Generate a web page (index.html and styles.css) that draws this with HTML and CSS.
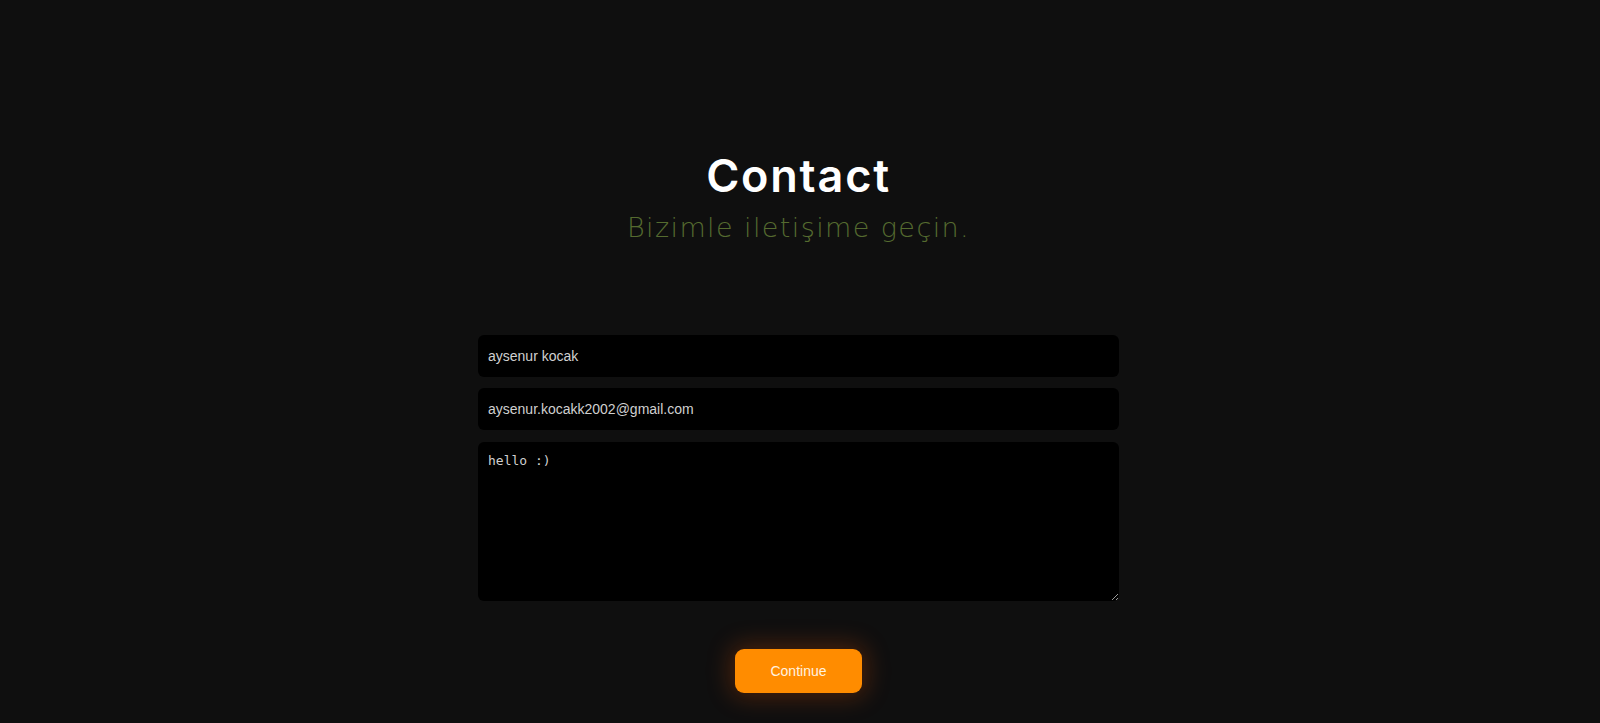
FILE: index.html
```html
<!DOCTYPE html>
<html lang="tr">
<head>
<meta charset="utf-8">
<title>Contact</title>
<link rel="stylesheet" href="styles.css">
</head>
<body>
<main class="contact">
  <header class="contact-head">
    <h1 class="title">Contact</h1>
    <p class="subtitle">Bizimle iletişime geçin.</p>
  </header>
  <form class="contact-form">
    <input class="field" type="text" value="aysenur kocak" spellcheck="false">
    <input class="field" type="email" value="aysenur.kocakk2002@gmail.com" spellcheck="false">
    <textarea class="field area" spellcheck="false">hello :)</textarea>
    <div class="actions">
      <button type="button" class="btn">Continue</button>
    </div>
  </form>
</main>
</body>
</html>
```
FILE: styles.css
```css
html, body {
  margin: 0;
  padding: 0;
  background: #0f0f0f;
  height: 100%;
}
body {
  font-family: "Liberation Sans", Arial, sans-serif;
  overflow: hidden;
}
.contact {
  display: flex;
  flex-direction: column;
  align-items: center;
  padding-top: 150px;
  padding-right: 3px;
}
.contact-head {
  display: flex;
  flex-direction: column;
  align-items: center;
  gap: 10px;
}
.title {
  margin: 0;
  font-family: Inter, "Noto Sans", sans-serif;
  font-weight: 600;
  font-size: 45px;
  line-height: 52px;
  color: #ffffff;
  letter-spacing: 1.8px;
}
.subtitle {
  margin: 0;
  font-family: "DejaVu Sans", sans-serif;
  font-weight: 200;
  font-size: 27px;
  line-height: 32px;
  color: #556b2f;
  letter-spacing: 1.4px;
}
.contact-form {
  margin-top: 91px;
  width: 641px;
  display: flex;
  flex-direction: column;
  gap: 11px;
}
.field {
  box-sizing: border-box;
  width: 100%;
  height: 42px;
  background: #000;
  border: none;
  border-radius: 6px;
  padding: 0 10px;
  color: #d0d0d0;
  font-family: "Liberation Sans", Arial, sans-serif;
  font-size: 14px;
  outline: none;
}
.area {
  height: 159px;
  margin-top: 1px;
  padding: 11px 10px;
  font-family: "DejaVu Sans Mono", monospace;
  font-size: 13px;
  line-height: 16px;
  resize: vertical;
}
.actions {
  display: flex;
  justify-content: center;
  margin-top: 37px;
}
.btn {
  width: 127px;
  height: 44px;
  border: none;
  border-radius: 9px;
  background: #ff8c00;
  color: #fff3e0;
  font-family: "Liberation Sans", Arial, sans-serif;
  font-size: 14px;
  box-shadow: 0 0 24px 4px rgba(255, 90, 0, 0.25);
  cursor: pointer;
}
```
